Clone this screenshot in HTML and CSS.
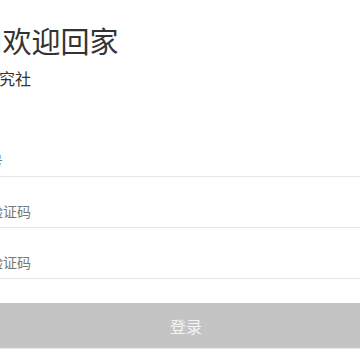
FILE: index.html
```html
<!doctype html>
<html>
<head>
<meta charset="utf-8">
<title>登录</title>
<link rel="stylesheet" href="styles.css">
</head>
<body>
<div class="head">
    <h1 class="title">HI欢迎回家</h1>
    <div class="sub">青年文化研究社</div>
</div>
<form class="form">
    <div class="row"><input type="text" placeholder="请输入手机号"></div>
    <div class="row"><input type="text" placeholder="请输入图形验证码"></div>
    <div class="row"><input type="text" placeholder="请输入短信验证码"></div>
    <button type="button" class="submit">登录</button>
</form>
</body>
</html>
```
FILE: styles.css
```css
body{
    margin: 0;
    font-family: "Noto Sans CJK SC", "Noto Sans", sans-serif;
    color: #333;
    background-color: #fff;
    overflow: hidden;
}
.head{
    padding-top: 20px;
}
.title{
    margin: 0 0 0 -27px;
    font-size: 29px;
    line-height: 40px;
    font-weight: normal;
    white-space: nowrap;
}
.sub{
    margin: 6px 0 0 -81px;
    font-size: 16px;
    line-height: 24px;
    white-space: nowrap;
}
.form{
    margin-top: 36px;
}
.row{
    margin-left: -81px;
    padding: 24px 0 6px 0;
    border-bottom: 1px solid #e6e6e6;
}
.row input{
    display: block;
    width: 100%;
    margin: 0;
    padding: 0;
    border: 0;
    outline: none;
    font-family: inherit;
    font-size: 14px;
    line-height: 20px;
    height: 20px;
    color: #333;
    background: transparent;
}
.row input::placeholder{
    color: #777;
}
.submit{
    display: block;
    width: 100%;
    height: 43px;
    margin-top: 24px;
    border: 0;
    border-bottom: 1px solid #e8e8e8;
    box-sizing: content-box;
    background-color: #c4c4c4;
    color: #f4f4f4;
    font-family: inherit;
    font-size: 16px;
}
```
